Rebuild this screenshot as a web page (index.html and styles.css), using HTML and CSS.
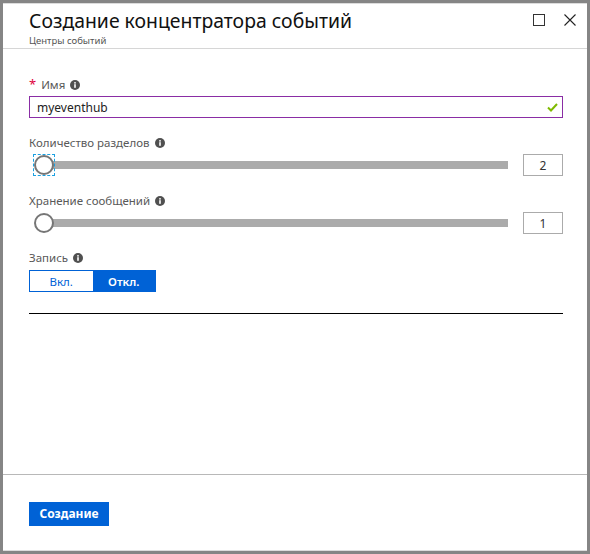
FILE: index.html
```html
<!DOCTYPE html>
<html lang="ru">
<head>
<meta charset="utf-8">
<link rel="stylesheet" href="styles.css">
</head>
<body>
<div class="panel">
  <header class="head">
    <div class="titles">
      <h1 class="title">Создание концентратора событий</h1>
      <div class="subtitle">Центры событий</div>
    </div>
    <div class="win-ctrls">
      <span class="maximize"></span>
      <svg class="close" width="12" height="12" viewBox="0 0 12 12"><path d="M0.5 0.5L11.5 11.5M11.5 0.5L0.5 11.5" stroke="#222" stroke-width="1.1" fill="none"/></svg>
    </div>
  </header>
  <main class="body">
    <div class="field">
      <div class="label"><span class="req">*</span>Имя<svg class="info" width="10" height="10" viewBox="0 0 10 10"><circle cx="5" cy="5" r="5" fill="#505050"/><rect x="4.2" y="4.2" width="1.6" height="3.6" fill="#fff"/><rect x="4.2" y="2.1" width="1.6" height="1.5" fill="#fff"/></svg></div>
      <div class="input">
        <span class="input-text">myeventhub</span>
        <svg class="check" width="11" height="9" viewBox="0 0 11 9"><path d="M1 4.5L4 7.5L10 1" stroke="#7fba00" stroke-width="2" fill="none"/></svg>
      </div>
    </div>
    <div class="field">
      <div class="label">Количество разделов<svg class="info" width="10" height="10" viewBox="0 0 10 10"><circle cx="5" cy="5" r="5" fill="#505050"/><rect x="4.2" y="4.2" width="1.6" height="3.6" fill="#fff"/><rect x="4.2" y="2.1" width="1.6" height="1.5" fill="#fff"/></svg></div>
      <div class="slider-row">
        <div class="slider">
          <div class="track"></div>
          <div class="thumb focused"></div>
        </div>
        <div class="value">2</div>
      </div>
    </div>
    <div class="field">
      <div class="label">Хранение сообщений<svg class="info" width="10" height="10" viewBox="0 0 10 10"><circle cx="5" cy="5" r="5" fill="#505050"/><rect x="4.2" y="4.2" width="1.6" height="3.6" fill="#fff"/><rect x="4.2" y="2.1" width="1.6" height="1.5" fill="#fff"/></svg></div>
      <div class="slider-row">
        <div class="slider">
          <div class="track"></div>
          <div class="thumb"></div>
        </div>
        <div class="value">1</div>
      </div>
    </div>
    <div class="field field-last">
      <div class="label">Запись<svg class="info" width="10" height="10" viewBox="0 0 10 10"><circle cx="5" cy="5" r="5" fill="#505050"/><rect x="4.2" y="4.2" width="1.6" height="3.6" fill="#fff"/><rect x="4.2" y="2.1" width="1.6" height="1.5" fill="#fff"/></svg></div>
      <div class="toggle">
        <span class="opt">Вкл.</span>
        <span class="opt opt-on">Откл.</span>
      </div>
    </div>
    <div class="rule"></div>
  </main>
  <footer class="foot">
    <button class="create">Создание</button>
  </footer>
</div>
</body>
</html>
```

FILE: styles.css
```css
* { box-sizing: border-box; }
html, body { margin: 0; padding: 0; }
body {
  width: 590px;
  height: 554px;
  font-family: "Noto Sans", "Open Sans", sans-serif;
  color: #222;
  background: #808080;
}
.panel {
  width: 590px;
  height: 554px;
  border: 3px solid #858585;
  background: #fff;
  display: flex;
  flex-direction: column;
  box-shadow: inset 0 1px 0 #dcdcdc, inset 0 -1px 0 #dcdcdc;
}
.head {
  height: 46px;
  flex: none;
  border-bottom: 1px solid #d6d6d6;
  display: flex;
  justify-content: space-between;
  padding: 6px 11px 0 26px;
}
.title {
  margin: 0;
  font-size: 19.4px;
  font-weight: 400;
  line-height: 24px;
  color: #111;
}
.subtitle {
  font-size: 9.5px;
  line-height: 12px;
  color: #555;
  margin-top: 2px;
}
.win-ctrls {
  display: flex;
  align-items: flex-start;
  gap: 19px;
  padding-top: 5px;
}
.maximize {
  display: block;
  width: 12px;
  height: 12px;
  border: 1px solid #333;
}
.close { display: block; }
.body {
  flex: 1;
  padding: 0 24px 0 26px;
}
.field { margin-top: 17px; }
.field:first-child { margin-top: 28px; }
.label {
  font-size: 11.5px;
  line-height: 16px;
  color: #595959;
  display: flex;
  align-items: center;
  height: 16px;
}
.req {
  color: #e0003c;
  font-size: 13px;
  margin-right: 5px;
  margin-top: -2px;
}
.info {
  display: block;
  margin-left: 5px;
  flex: none;
}
.input {
  margin-top: 3px;
  height: 22px;
  border: 1px solid #8a2da5;
  display: flex;
  align-items: center;
  justify-content: space-between;
  padding: 0 4px 0 7px;
}
.input-text { font-size: 12px; color: #222; }
.check { display: block; }
.slider-row {
  margin-top: 3px;
  height: 22px;
  display: flex;
  align-items: center;
  gap: 15px;
}
.slider {
  flex: 1;
  position: relative;
  height: 22px;
  display: flex;
  align-items: center;
}
.track {
  margin-left: 15px;
  flex: 1;
  height: 8px;
  background: #ababab;
}
.thumb {
  position: absolute;
  left: 5px;
  top: 1px;
  width: 20px;
  height: 20px;
  border-radius: 50%;
  background: #fff;
  border: 2px solid #767676;
}
.focused::after {
  content: "";
  position: absolute;
  left: -3px;
  top: -3px;
  width: 20px;
  height: 20px;
  border: 1px dashed #1ba1e2;
}
.value {
  width: 40px;
  height: 22px;
  border: 1px solid #ababab;
  font-size: 12px;
  display: flex;
  align-items: center;
  justify-content: center;
  color: #333;
}
.field-last { margin-top: 16px; }
.toggle {
  margin-top: 4px;
  display: flex;
  width: 127px;
  height: 22px;
  border: 1px solid #0062d6;
}
.opt {
  flex: 1;
  display: flex;
  align-items: center;
  justify-content: center;
  font-size: 11.5px;
  color: #0062d6;
}
.opt-on {
  background: #0062d6;
  color: #fff;
  font-weight: 600;
}
.rule {
  margin-top: 21px;
  height: 1px;
  background: #000;
}
.foot {
  flex: none;
  height: 77px;
  border-top: 1px solid #b8b8b8;
  padding: 26px 0 0 26px;
}
.create {
  width: 80px;
  height: 24px;
  border: none;
  background: #0062d6;
  color: #fff;
  font-family: "Noto Sans", "Open Sans", sans-serif;
  font-weight: 700;
  font-size: 12px;
  padding: 0;
}
```
